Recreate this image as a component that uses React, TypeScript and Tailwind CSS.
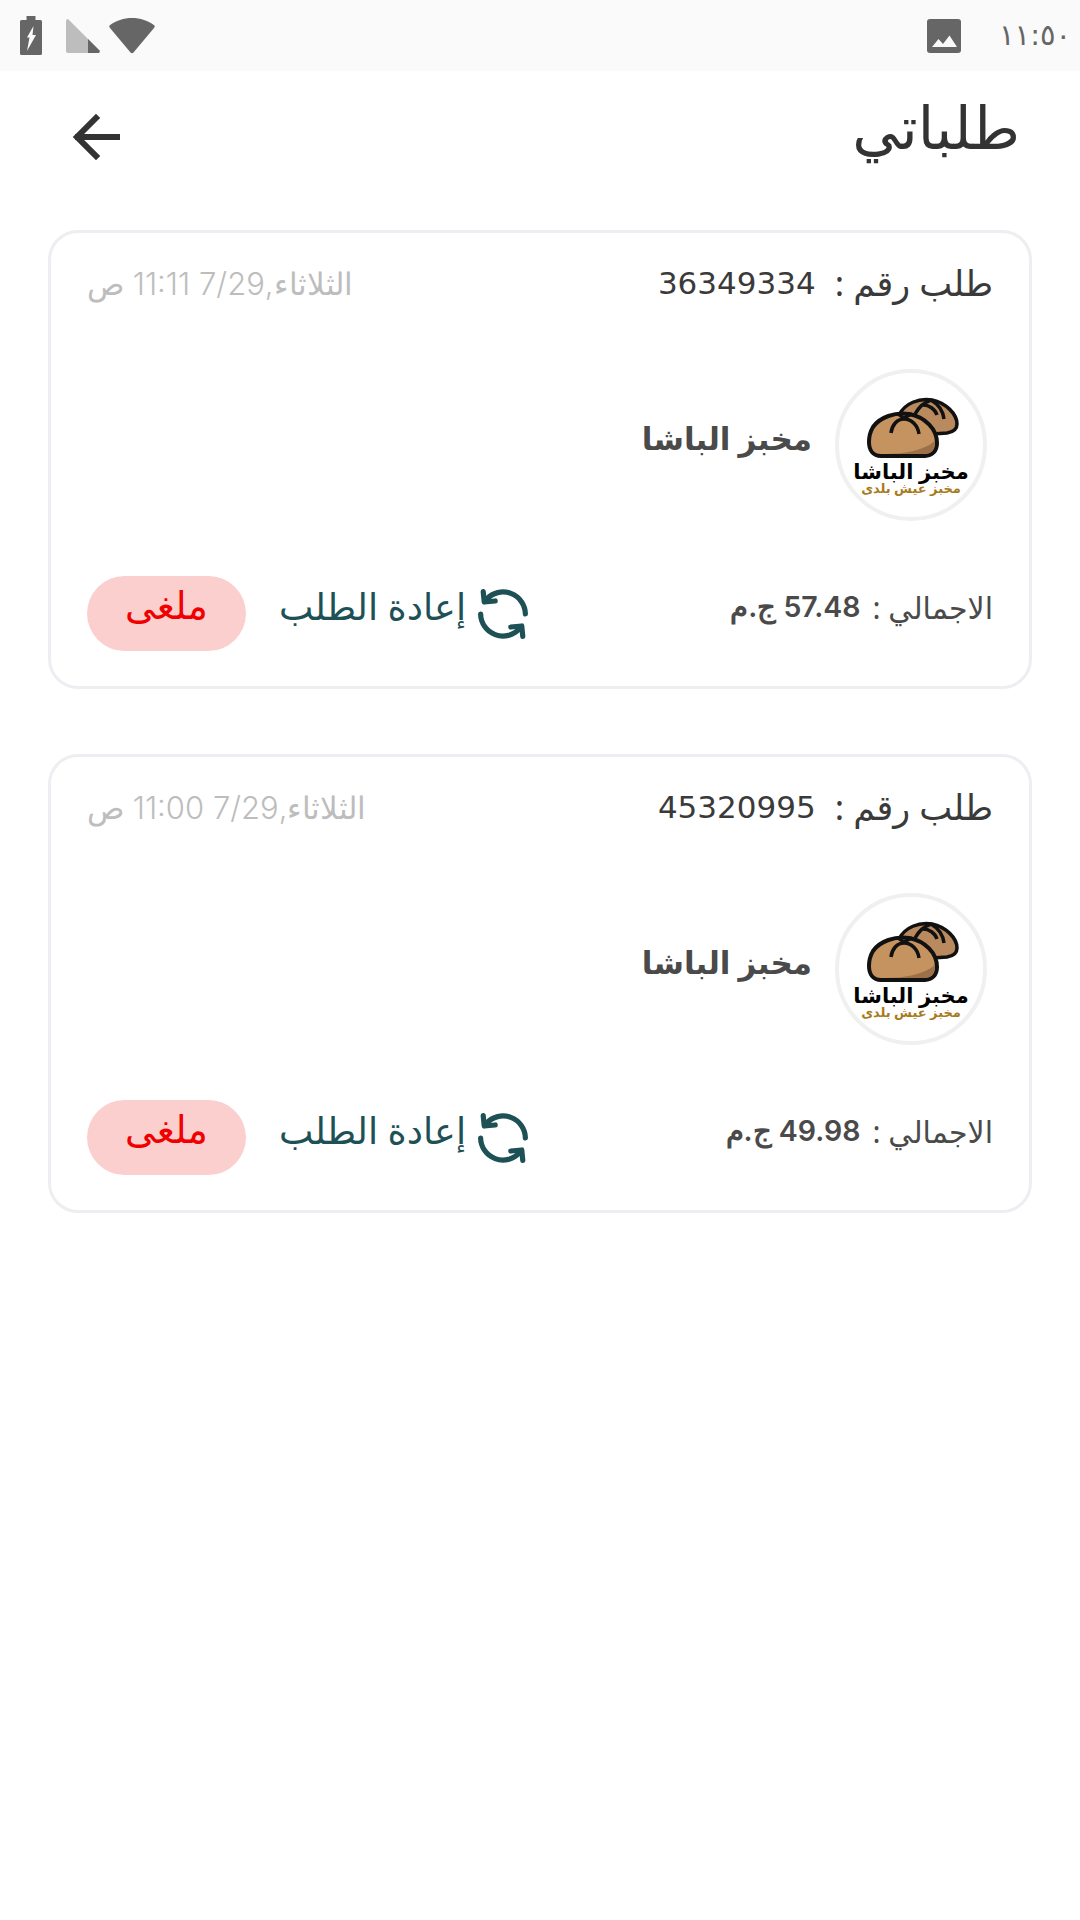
const Logo = () => (
  <div className="relative w-[152px] h-[152px] rounded-full border-[4px] border-[#f0f0f0] bg-white shrink-0 overflow-hidden">
    <svg viewBox="0 0 152 152" className="absolute left-[-4px] top-[-4px] w-[152px] h-[152px]">
      <path d="M64 46 C70 34 84 29 97 31 C111 34 122 45 122 55 C122 60 118 63 112 64 L84 66 Z" fill="#b98a5e" stroke="#111" strokeWidth="3.5" strokeLinejoin="round" />
      <path d="M80 45 C84 38 90 33 96 31 M96 31 C103 35 108 42 109 50 M88 36 C94 36 100 40 102 46" fill="none" stroke="#111" strokeWidth="3.5" />
      <path d="M38 58 C45 48 60 43 74 45 C90 48 102 60 102 74 C102 82 97 87 90 87 L46 87 C38 87 34 81 34 73 C34 67 35 63 38 58 Z" fill="#c4935f" stroke="#111" strokeWidth="4" strokeLinejoin="round" />
      <path d="M50 85 C68 85 88 82 100 72 C100 81 96 85 90 85 L48 85 Z" fill="#9c7048" />
      <path d="M56 64 C57 56 62 50 69 50 C77 50 83 57 84 65 M69 50 C67 47 65 46 63 45 M69 50 C71 47 74 46 77 45" fill="none" stroke="#111" strokeWidth="3.5" />
    </svg>
    <div dir="rtl" className="absolute left-0 right-0 top-[88px] text-center text-[21px] leading-[20px] font-semibold text-black">مخبز الباشا</div>
    <div dir="rtl" className="absolute left-0 right-0 top-[108px] text-center text-[13px] leading-[14px] font-semibold text-[#a87a1c]">مخبز عيش بلدى</div>
  </div>
);

const Refresh = () => (
  <svg viewBox="0 0 48 48" className="w-[50px] h-[50px] shrink-0" fill="none" stroke="#1e5155" strokeWidth="5" strokeLinecap="round" strokeLinejoin="round">
    <path d="M8 10 A21.5 21.5 0 0 1 45.5 24" />
    <path d="M2.5 24 A21.5 21.5 0 0 0 40 38" />
    <path d="M5 2.5 L6 12.5 L16.5 11.5" />
    <path d="M43 45.5 L42 35.5 L31.5 36.5" />
  </svg>
);

const Card = ({ num, date, total }: { num: string; date: string; total: string }) => (
  <div className="h-[459px] rounded-[30px] border-[3px] border-[#eeeef2] bg-white px-[36px] flex flex-col">
    <div className="flex items-center justify-between h-[72px] pt-[28px]">
      <div className="text-[35px] text-[#3a3a3a] flex items-center">
        <span>طلب رقم :</span>
        <span className="mr-[19px] text-[31px] font-['DejaVu_Sans',sans-serif]" dir="ltr">{num}</span>
      </div>
      <div className="text-[31px] text-[#bdbdbd] font-light font-['Inter','Noto_Sans',sans-serif] pt-[3px]">{date}</div>
    </div>
    <div className="flex items-center mt-[64px] mr-[6px]">
      <Logo />
      <div className="mr-[23px] text-[31px] font-semibold text-[#4a4a4a] pb-[14px]">مخبز الباشا</div>
    </div>
    <div className="flex items-center justify-between mt-[55px]">
      <div className="text-[30px] text-[#4a4a4a] flex items-center pb-[12px]">
        <span>الاجمالي :</span>
        <span className="mr-[12px] font-semibold text-[28.5px] font-['Inter','Noto_Sans',sans-serif]">{total}</span>
      </div>
      <div className="flex items-center">
        <Refresh />
        <span className="mr-[12px] text-[36.5px] text-[#1e5155] mb-[14px]">إعادة الطلب</span>
        <div className="mr-[33px] w-[159px] h-[75px] rounded-full bg-[#fccfcf] flex items-center justify-center text-[38px] text-[#f00000] pb-[18px]">ملغى</div>
      </div>
    </div>
  </div>
);

export default function App() {
  return (
    <div dir="rtl" className="w-[1080px] h-[1920px] bg-white font-['Noto_Sans','DejaVu_Sans',sans-serif] overflow-hidden">
      <div dir="ltr" className="h-[71px] bg-[#fafafa] flex items-center justify-between">
        <div className="flex items-center ml-[20px]">
          <svg viewBox="0 0 22 39" className="w-[22px] h-[39px]">
            <path d="M6.5 0 H15.5 V4 H20.5 A1.5 1.5 0 0 1 22 5.5 V37.5 A1.5 1.5 0 0 1 20.5 39 H1.5 A1.5 1.5 0 0 1 0 37.5 V5.5 A1.5 1.5 0 0 1 1.5 4 H6.5 Z" fill="#666" />
            <path d="M7 21.5 L13.5 10 L12.5 19 L16 19 L7 35 L9.5 21.5 Z" fill="#fafafa" />
          </svg>
          <svg viewBox="0 0 34 34" className="w-[34px] h-[34px] ml-[24px]">
            <path d="M2 0 L34 32 Q34 34 32 34 H2 Q0 34 0 32 V2 Q0 0 2 0 Z" fill="#bdbdbd" />
            <path d="M22 20 L33.5 31.5 Q34 34 32 34 H22 Z" fill="#666" />
          </svg>
          <svg viewBox="0 0 46 37" className="w-[46px] h-[37px] ml-[9px]">
            <path d="M0.5 8.5 C13 -1.5 33 -1.5 45.5 8.5 Q46 10 45 11 L24.5 35.5 Q23 37 21.5 35.5 L1 11 Q0 10 0.5 8.5 Z" fill="#666" />
          </svg>
        </div>
        <div className="flex items-center mr-[20px]">
          <svg viewBox="0 0 34 34" className="w-[34px] h-[34px]">
            <rect width="34" height="34" rx="3" fill="#666" />
            <path d="M5 28 L11.5 20 L16 25 L22.5 16.5 L30 28 Z" fill="#fafafa" />
          </svg>
          <span className="ml-[38px] text-[29px] text-[#666] w-[61px] whitespace-nowrap font-['DejaVu_Sans',sans-serif]">١١:٥٠</span>
        </div>
      </div>
      <div className="flex items-center justify-between h-[88px] pr-[60px] pl-[72px] mt-[22px]">
        <div className="text-[59px] leading-none text-[#333] mb-[22px]">طلباتي</div>
        <svg viewBox="0 0 48 48" className="w-[48px] h-[48px]" fill="none" stroke="#333" strokeWidth="6" strokeLinecap="square">
          <path d="M45 24 H6 M24 5 L5 24 L24 43" />
        </svg>
      </div>
      <div className="flex flex-col gap-[65px] px-[48px] mt-[49px]">
        <Card num="36349334" date="الثلاثاء,7/29 11:11 ص" total="57.48 ج.م" />
        <Card num="45320995" date="الثلاثاء,7/29 11:00 ص" total="49.98 ج.م" />
      </div>
    </div>
  );
}
